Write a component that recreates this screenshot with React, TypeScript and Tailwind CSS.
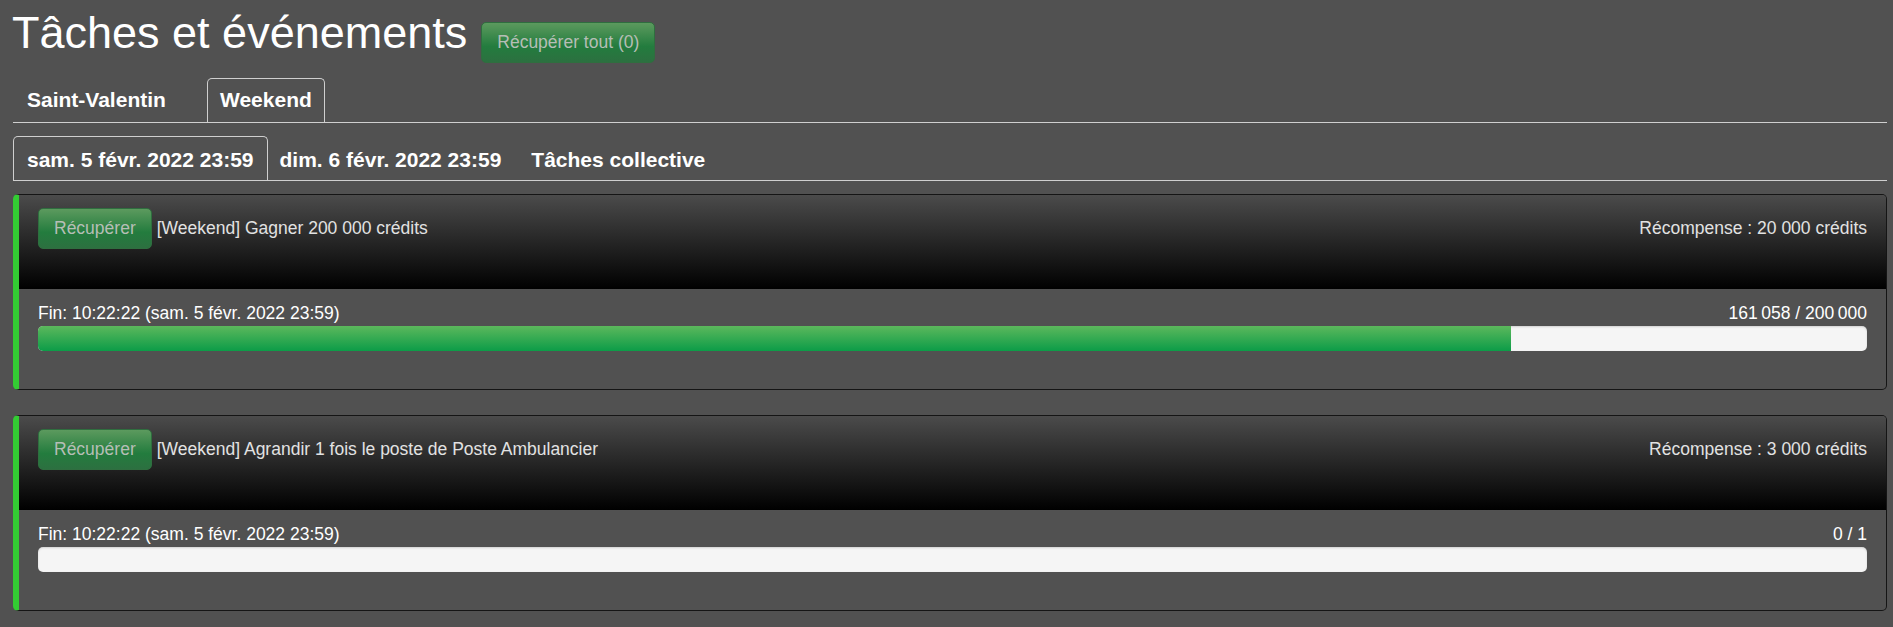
import React from "react";

const btn =
  "border border-[#2f6e3f] rounded-[5px] px-[15px] py-[7px] leading-[25px] text-[17.5px] text-[#b6beb6] bg-[linear-gradient(to_bottom,#5c9a5e_0%,#237c3e_60%,#2c7040_100%)]";

type Task = {
  title: string;
  reward: string;
  end: string;
  progress: string;
  pct: number;
};

const tasks: Task[] = [
  {
    title: "[Weekend] Gagner 200 000 crédits",
    reward: "Récompense : 20 000 crédits",
    end: "Fin: 10:22:22 (sam. 5 févr. 2022 23:59)",
    progress: "161\u202f058 / 200\u202f000",
    pct: 80.53,
  },
  {
    title: "[Weekend] Agrandir 1 fois le poste de Poste Ambulancier",
    reward: "Récompense : 3 000 crédits",
    end: "Fin: 10:22:22 (sam. 5 févr. 2022 23:59)",
    progress: "0 / 1",
    pct: 0,
  },
];

function Panel({ t }: { t: Task }) {
  return (
    <div className="mb-[25px] rounded-[5px] border border-[#151515] border-l-[6px] border-l-[#33cc33] overflow-hidden">
      <div className="h-[94px] px-[19px] pt-[13px] bg-[linear-gradient(to_bottom,#4b4b4b_0%,#000000_100%)] flex items-baseline justify-between text-[17.5px] text-[#e2e2e2]">
        <div className="flex items-baseline">
          <button className={btn}>Récupérer</button>
          <span className="ml-[5px]">{t.title}</span>
        </div>
        <span>{t.reward}</span>
      </div>
      <div className="px-[19px] pt-[12px] pb-[38px] text-[17.5px] text-white">
        <div className="flex justify-between leading-[25px]">
          <span>{t.end}</span>
          <span>{t.progress}</span>
        </div>
        <div className="h-[25px] rounded-[5px] bg-[#f5f5f5] shadow-[inset_0_1px_2px_rgba(0,0,0,0.15)] overflow-hidden">
          <div
            className="h-full bg-[linear-gradient(to_bottom,#5cb85c_0%,#0c9c48_100%)]"
            style={{ width: `${t.pct}%` }}
          />
        </div>
      </div>
    </div>
  );
}

export default function App() {
  const tabText = "text-[21px] font-bold text-white leading-[28px]";
  return (
    <div className="min-h-screen bg-[#515151] font-['Liberation_Sans',Arial,sans-serif] pl-[13px] pr-[6px] pt-[8px]">
      <div className="flex items-baseline">
        <h1 className="text-[45px] leading-[49.5px] text-white font-normal -ml-[1px]">
          Tâches et événements
        </h1>
        <button className={`ml-[14px] ${btn}`}>Récupérer tout (0)</button>
      </div>

      <div className="mt-[15px] flex border-b border-[#cfcfcf]">
        <div className={`w-[194px] pl-[13px] pt-[7px] pb-[8px] border border-b-0 border-transparent ${tabText}`}>
          Saint-Valentin
        </div>
        <div className={`px-[12px] pt-[7px] pb-[8px] border border-b-0 border-[#cfcfcf] rounded-t-[5px] ${tabText}`}>
          Weekend
        </div>
      </div>

      <div className="mt-[13px] flex border-b border-[#cfcfcf]">
        <div className={`px-[13px] pt-[9px] pb-[6px] border border-b-0 border-[#cfcfcf] rounded-t-[5px] ${tabText}`}>
          sam. 5 févr. 2022 23:59
        </div>
        <div className={`mr-[2px] pl-[11px] pr-[13px] pt-[9px] pb-[6px] border border-b-0 border-transparent ${tabText}`}>
          dim. 6 févr. 2022 23:59
        </div>
        <div className={`mr-[2px] px-[13px] pt-[9px] pb-[6px] border border-b-0 border-transparent ${tabText}`}>
          Tâches collective
        </div>
      </div>

      <div className="mt-[13px]">
        {tasks.map((t, i) => (
          <Panel key={i} t={t} />
        ))}
      </div>
    </div>
  );
}
